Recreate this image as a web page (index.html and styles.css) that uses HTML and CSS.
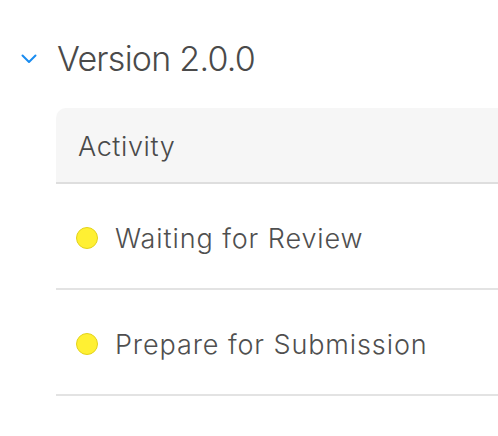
FILE: index.html
```html
<!DOCTYPE html>
<html>
<head>
<meta charset="utf-8">
<link rel="stylesheet" href="styles.css">
</head>
<body>
<div class="page">
  <div class="version">
    <svg class="chev" width="16" height="10" viewBox="0 0 16 10"><path d="M1.5 1.5 L8 8 L14.5 1.5" fill="none" stroke="#1a8cf0" stroke-width="2" stroke-linecap="round" stroke-linejoin="round"/></svg>
    <h1 class="title">Version 2.0.0</h1>
  </div>
  <div class="card">
    <div class="card-head">Activity</div>
    <div class="row"><span class="dot"></span><span class="label">Waiting for Review</span></div>
    <div class="row"><span class="dot"></span><span class="label">Prepare for Submission</span></div>
  </div>
</div>
</body>
</html>
```
FILE: styles.css
```css
html, body { margin: 0; padding: 0; background: #fff; }
body { font-family: Inter, "Liberation Sans", sans-serif; width: 498px; height: 436px; overflow: hidden; }
.page { padding-top: 32px; }
.version { display: flex; align-items: center; height: 52px; padding-left: 21px; }
.chev { display: block; margin-top: 2px; }
.title { margin: 0 0 0 20px; font-weight: 300; font-size: 34px; color: #4a4a4a; letter-spacing: -0.75px; }
.card { margin: 24px 0 0 56px; }
.card-head { background: #f6f6f6; border-top-left-radius: 10px; border-bottom: 2px solid #dedede; display: flex; align-items: center; padding-left: 22px; padding-top: 2px; box-sizing: border-box; height: 76px; font-size: 27px; font-weight: 300; color: #4a4a4a; letter-spacing: 0.6px; }
.row { height: 106px; box-sizing: border-box; border-bottom: 2px solid #e3e3e3; display: flex; align-items: center; padding-left: 20px; padding-top: 4px; }
.dot { width: 20px; height: 20px; border-radius: 50%; background: #fff033; border: 1px solid #e3d31a; flex: none; }
.label { margin-left: 17px; font-size: 27px; font-weight: 300; color: #4f4f4f; letter-spacing: 0.9px; }
```
